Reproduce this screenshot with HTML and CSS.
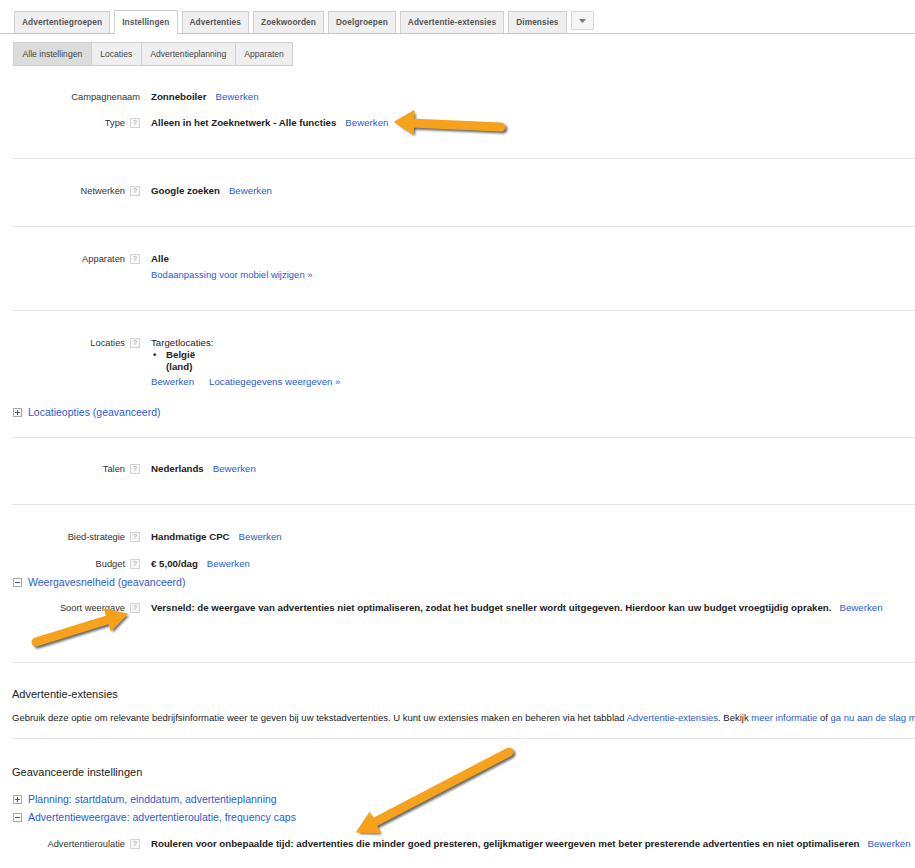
FILE: index.html
```html
<!DOCTYPE html>
<html lang="nl">
<head>
<meta charset="utf-8">
<title>Instellingen</title>
<link rel="stylesheet" href="styles.css">
</head>
<body>
<div class="tabs">
  <div class="tab">Advertentiegroepen</div>
  <div class="tab active">Instellingen</div>
  <div class="tab">Advertenties</div>
  <div class="tab">Zoekwoorden</div>
  <div class="tab">Doelgroepen</div>
  <div class="tab">Advertentie-extensies</div>
  <div class="tab">Dimensies</div>
  <div class="tab-menu"><svg width="7" height="4" viewBox="0 0 7 4"><path d="M0 0h7L3.5 4z" fill="#777"/></svg></div>
</div>
<div class="subtabs">
  <div class="subtab active">Alle instellingen</div>
  <div class="subtab">Locaties</div>
  <div class="subtab">Advertentieplanning</div>
  <div class="subtab">Apparaten</div>
</div>

<div class="content">
  <section class="sec s1">
    <div class="row"><div class="lbl">Campagnenaam</div><div class="val"><b>Zonneboiler</b><a class="edit">Bewerken</a></div></div>
    <div class="row r-gap"><div class="lbl">Type<span class="help">?</span></div><div class="val"><b>Alleen in het Zoeknetwerk - Alle functies</b><a class="edit">Bewerken</a></div></div>
  </section>

  <section class="sec s2">
    <div class="row"><div class="lbl">Netwerken<span class="help">?</span></div><div class="val"><b>Google zoeken</b><a class="edit">Bewerken</a></div></div>
  </section>

  <section class="sec s3">
    <div class="row"><div class="lbl">Apparaten<span class="help">?</span></div>
      <div class="val"><b>Alle</b><div class="sub-link"><a>Bodaanpassing voor mobiel wijzigen »</a></div></div></div>
  </section>

  <section class="sec s4">
    <div class="row"><div class="lbl">Locaties<span class="help">?</span></div>
      <div class="val">
        <div>Targetlocaties:</div>
        <ul class="loclist"><li><b>België<br>(land)</b></li></ul>
        <div class="loc-links"><a>Bewerken</a><a>Locatiegegevens weergeven »</a></div>
      </div>
    </div>
    <div class="toggle t-loc"><span class="tg plus"></span><a>Locatieopties (geavanceerd)</a></div>
  </section>

  <section class="sec s5">
    <div class="row"><div class="lbl">Talen<span class="help">?</span></div><div class="val"><b>Nederlands</b><a class="edit">Bewerken</a></div></div>
  </section>

  <section class="sec s6">
    <div class="row"><div class="lbl">Bied-strategie<span class="help">?</span></div><div class="val"><b>Handmatige CPC</b><a class="edit">Bewerken</a></div></div>
    <div class="row r-budget"><div class="lbl">Budget<span class="help">?</span></div><div class="val"><b>€ 5,00/dag</b><a class="edit">Bewerken</a></div></div>
    <div class="toggle t-weer"><span class="tg minus"></span><a>Weergavesnelheid (geavanceerd)</a></div>
    <div class="row r-soort"><div class="lbl">Soort weergave<span class="help">?</span></div><div class="val"><b>Versneld: de weergave van advertenties niet optimaliseren, zodat het budget sneller wordt uitgegeven. Hierdoor kan uw budget vroegtijdig opraken.</b><a class="edit e-wide">Bewerken</a></div></div>
  </section>

  <section class="sec s7">
    <h2 class="heading">Advertentie-extensies</h2>
    <p class="para">Gebruik deze optie om relevante bedrijfsinformatie weer te geven bij uw tekstadvertenties. U kunt uw extensies maken en beheren via het tabblad <a>Advertentie-extensies</a>. Bekijk <a>meer informatie</a> of <a>ga nu aan de slag m</a></p>
  </section>

  <section class="sec s8">
    <h2 class="heading">Geavanceerde instellingen</h2>
    <div class="toggle t-plan"><span class="tg plus"></span><a>Planning: startdatum, einddatum, advertentieplanning</a></div>
    <div class="toggle t-adv"><span class="tg minus"></span><a>Advertentieweergave: advertentieroulatie, frequency caps</a></div>
    <div class="row r-rot"><div class="lbl">Advertentieroulatie<span class="help">?</span></div><div class="val"><b>Rouleren voor onbepaalde tijd: advertenties die minder goed presteren, gelijkmatiger weergeven met beter presterende advertenties en niet optimaliseren</b><a class="edit e-wide">Bewerken</a></div></div>
  </section>
</div>

<svg class="arrows" width="915" height="868" viewBox="0 0 915 868">
  <defs>
    <filter id="sh" x="-20%" y="-20%" width="140%" height="140%">
      <feGaussianBlur stdDeviation="1.2"/>
    </filter>
  </defs>
  <g class="arrow-shadow" transform="translate(2,2)" filter="url(#sh)">
    <line x1="410" y1="123" x2="501" y2="127" />
    <polygon points="395,122 414,111 413,134" />
    <line x1="36" y1="642" x2="110" y2="619" />
    <polygon points="127,614 104.7,609.4 111.1,630.4" />
    <line x1="509" y1="752" x2="373" y2="823" />
    <polygon points="357,832 369.6,812.9 379.8,832.4" />
  </g>
  <g class="arrow-fill">
    <line x1="410" y1="123" x2="501" y2="127" />
    <polygon points="395,122 414,111 413,134" />
    <line x1="36" y1="642" x2="110" y2="619" />
    <polygon points="127,614 104.7,609.4 111.1,630.4" />
    <line x1="509" y1="752" x2="373" y2="823" />
    <polygon points="357,832 369.6,812.9 379.8,832.4" />
  </g>
</svg>
</body>
</html>
```

FILE: styles.css
```css
html, body {
  margin: 0;
  padding: 0;
}
body {
  font-family: "Liberation Sans", Arial, sans-serif;
  font-size: 9.7px;
  color: #222;
  background: #fff;
  width: 915px;
  height: 868px;
  overflow: hidden;
  position: relative;
}
a {
  color: #2a5bd7;
  text-decoration: none;
  cursor: pointer;
}
b {
  font-weight: bold;
  color: #222;
}

/* top tabs */
.tabs {
  display: flex;
  align-items: flex-end;
  gap: 4px;
  margin-top: 11px;
  padding-left: 14px;
  height: 22px;
  border-bottom: 1px solid #c8c8c8;
  white-space: nowrap;
}
.tab {
  box-sizing: border-box;
  height: 22px;
  line-height: 21px;
  padding: 0 7px;
  border: 1px solid #d0d0d0;
  border-bottom: none;
  background: #efefef;
  color: #555;
  font-size: 8.3px;
  font-weight: bold;
  letter-spacing: 0.1px;
}
.tab.active {
  background: #fff;
  height: 24px;
  margin-bottom: -1px;
  line-height: 23px;
  color: #555;
  border-color: #cfcfcf;
}
.tab-menu {
  box-sizing: border-box;
  align-self: flex-start;
  width: 23px;
  height: 19px;
  margin-left: 0;
  border: 1px solid #d8d8d8;
  background: #f6f6f6;
  display: flex;
  align-items: center;
  justify-content: center;
}

/* sub tabs */
.subtabs {
  display: flex;
  margin: 8px 0 0 13px;
  white-space: nowrap;
}
.subtab {
  box-sizing: border-box;
  height: 24px;
  line-height: 22px;
  padding: 0 8.5px;
  border: 1px solid #cfcfcf;
  margin-right: -1px;
  background: #efefef;
  color: #444;
  font-size: 8.6px;
}
.subtab.active {
  background: #dcdcdc;
}

/* content */
.content {
  margin-left: 12px;
}
.sec {
  border-bottom: 1px solid #e6e6e6;
  padding: 26px 0 29px;
}
.s1 { padding: 25px 0 29px; }
.s4 { padding-bottom: 19px; }
.s5 { padding-top: 25px; }
.s6 { padding-bottom: 48px; }
.s7 { padding: 25px 0 14px; }
.s8 { padding: 27px 0 0; border-bottom: none; }

.row {
  display: flex;
  align-items: flex-start;
  line-height: 12px;
  white-space: nowrap;
}
.r-gap { margin-top: 14px; }
.r-budget { margin-top: 15px; }
.r-soort { margin-top: 14px; }
.r-rot { margin-top: 15px; }
.lbl {
  width: 128px;
  display: flex;
  justify-content: flex-end;
  align-items: center;
  color: #333;
  font-size: 9.3px;
}
.help {
  box-sizing: border-box;
  width: 10px;
  height: 10px;
  margin-left: 5px;
  border: 1px solid #d4d4d4;
  background: #f6f6f6;
  color: #9a9a9a;
  font-size: 7px;
  line-height: 8px;
  text-align: center;
  flex: none;
}
.val {
  margin-left: 11px;
}
.edit {
  margin-left: 9px;
}
.e-wide {
  margin-left: 8px;
}
.sub-link {
  margin-top: 4px;
  font-size: 9.5px;
}
.loclist {
  list-style: none;
  margin: 0;
  padding: 0 0 0 2px;
}
.loclist li {
  display: flex;
}
.loclist li::before {
  content: "•";
  width: 13px;
  font-weight: bold;
}
.loc-links {
  margin-top: 3px;
  display: flex;
  gap: 15px;
}

.toggle {
  display: flex;
  align-items: center;
  line-height: 12px;
  font-size: 10.5px;
  white-space: nowrap;
}
.t-loc { margin-top: 18px; margin-left: 1px; }
.t-weer { margin-top: 6px; margin-left: 1px; }
.t-plan { margin-top: 14px; margin-left: 1px; }
.t-adv { margin-top: 6px; margin-left: 1px; }
.tg {
  box-sizing: border-box;
  width: 9px;
  height: 9px;
  border: 1px solid #a8a8a8;
  background: #fff;
  margin-right: 6px;
  position: relative;
  flex: none;
}
.tg::before {
  content: "";
  position: absolute;
  left: 1px;
  right: 1px;
  top: 3px;
  height: 1px;
  background: #555;
}
.tg.plus::after {
  content: "";
  position: absolute;
  top: 1px;
  bottom: 1px;
  left: 3px;
  width: 1px;
  background: #555;
}

.heading {
  margin: 0;
  font-size: 11px;
  font-weight: normal;
  line-height: 13px;
  color: #222;
}
.para {
  margin: 11px 0 0;
  line-height: 12px;
  font-size: 9.5px;
  white-space: nowrap;
  color: #222;
}

/* annotation arrows */
.arrows {
  position: absolute;
  left: 0;
  top: 0;
  pointer-events: none;
}
.arrow-fill line,
.arrow-shadow line {
  stroke-width: 9;
  stroke-linecap: round;
}
.arrow-fill line { stroke: #f7a21c; }
.arrow-fill polygon { fill: #f7a21c; stroke: #f7a21c; stroke-width: 1.5; stroke-linejoin: round; }
.arrow-shadow line { stroke: #3a3a3a; opacity: 0.75; }
.arrow-shadow polygon { fill: #3a3a3a; opacity: 0.75; }
```
